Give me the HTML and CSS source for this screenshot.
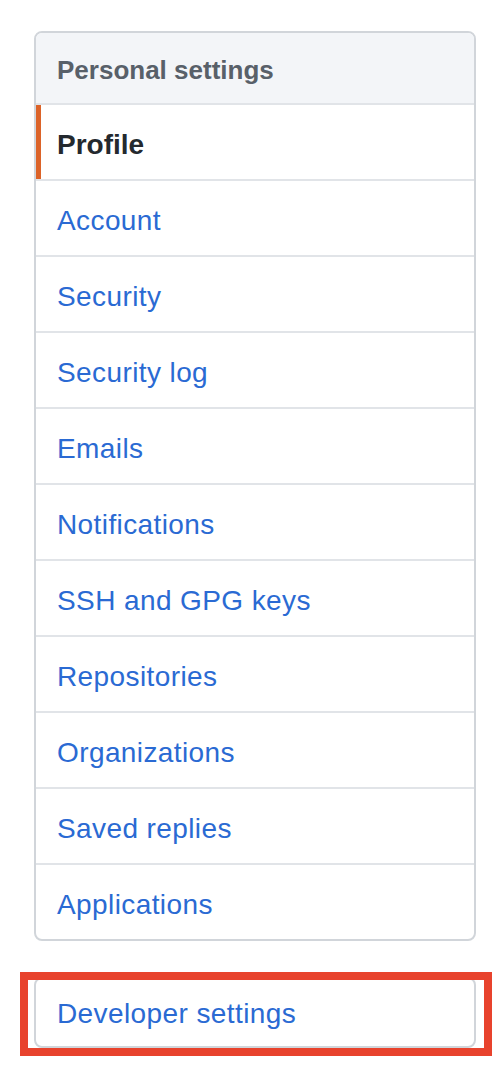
FILE: index.html
```html
<!DOCTYPE html>
<html lang="en">

<head>
    <meta charset="UTF-8">
    <meta name="viewport" content="width=device-width, initial-scale=1.0">
    <title>Settings</title>
    <link rel="stylesheet" href="styles.css">
</head>

<body>
    <div class="sidebar">
        <nav class="menu">
            <h3 class="menu-heading">Personal settings</h3>
            <a class="menu-item selected" href="#">Profile</a>
            <a class="menu-item" href="#">Account</a>
            <a class="menu-item" href="#">Security</a>
            <a class="menu-item" href="#">Security log</a>
            <a class="menu-item" href="#">Emails</a>
            <a class="menu-item" href="#">Notifications</a>
            <a class="menu-item" href="#">SSH and GPG keys</a>
            <a class="menu-item" href="#">Repositories</a>
            <a class="menu-item" href="#">Organizations</a>
            <a class="menu-item" href="#">Saved replies</a>
            <a class="menu-item" href="#">Applications</a>
        </nav>

        <div class="highlight">
            <nav class="menu">
                <a class="menu-item" href="#">Developer settings</a>
            </nav>
        </div>
    </div>
</body>

</html>
```

FILE: styles.css
```css
body {
    margin: 0;
    padding: 0 0 20px;
    background-color: #fff;
    font-family: "Liberation Sans", Arial, sans-serif;
}

.sidebar {
    width: 442px;
    margin: 31px 0 0 34px;
}

.menu {
    display: flex;
    flex-direction: column;
    border: 2px solid #d1d5da;
    border-radius: 8px;
    background-color: #fff;
    overflow: hidden;
}

.menu-heading {
    margin: 0;
    height: 70px;
    box-sizing: border-box;
    display: flex;
    align-items: center;
    padding: 4px 22px 0 21px;
    background-color: #f3f5f8;
    border-bottom: 2px solid #e1e4e8;
    color: #586069;
    font-size: 26px;
    font-weight: bold;
}

.menu-heading {
    height: 72px;
}

.menu-item {
    position: relative;
    height: 76px;
    box-sizing: border-box;
    display: flex;
    align-items: center;
    padding: 5px 22px 0 21px;
    border-bottom: 2px solid #e1e4e8;
    color: #2a6ad3;
    font-size: 28px;
    letter-spacing: 0.4px;
    text-decoration: none;
}

.menu-item:last-child {
    border-bottom: none;
    height: 74px;
}

.menu-item.selected {
    color: #24292e;
    font-weight: bold;
    letter-spacing: 0;
}

.menu-item.selected::before {
    content: "";
    position: absolute;
    left: 0;
    top: 0;
    bottom: 0;
    width: 5px;
    background-color: #dc6328;
}

.highlight {
    position: relative;
    margin-top: 36px;
}

.highlight .menu-item {
    height: 67px;
    padding-top: 2px;
}

.highlight::after {
    content: "";
    position: absolute;
    top: -5px;
    bottom: -8px;
    left: -14px;
    right: -16px;
    border: 8px solid #e8432d;
    pointer-events: none;
}
```
